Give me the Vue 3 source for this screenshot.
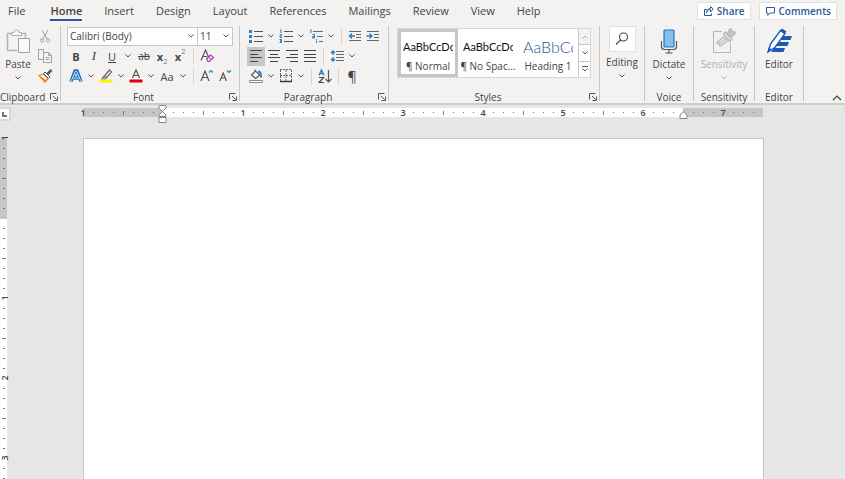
<template>
  <div class="word">
    <header class="ribbon">
      <nav class="tabs">
        <a v-for="tab in tabs" :key="tab" href="#" class="tab" :class="{ active: tab === activeTab }" @click.prevent="activeTab = tab">{{ tab }}</a>
        <div class="actions">
          <button type="button" class="action">
            <svg width="11" height="11" viewBox="0 0 11 11"><path d="M4 3.500H1.500v6h7V7.500M3.500 7c.2-2.200 1.500-3.200 4-3.200V6L10.300 3 7.500.7v1.800C5 2.800 3.700 4.300 3.500 7z" /></svg>
            Share
          </button>
          <button type="button" class="action">
            <svg width="11" height="11" viewBox="0 0 11 11"><path d="M1.500 1.500h8v5.500H5L2.800 9.300V7H1.500z" /></svg>
            Comments
          </button>
        </div>
      </nav>

      <div class="groups">
        <section class="group clipboard">
          <div class="clip-content">
            <button type="button" class="big">
              <svg width="24" height="26" viewBox="0 0 24 26" fill="none">
                <path d="M5.500 5.500h-4v17H11M15.500 5.500h4V10" stroke="#b5b3b1" stroke-width="1.500" />
                <path d="M5.500 7.500v-3H8a2.500 2.500 0 0 1 5 0h2.500v3z" fill="#f8f8f8" stroke="#b0aeac" />
                <path d="M12.500 10.500h11v14h-11z" fill="#fafafa" stroke="#a3a1a0" />
              </svg>
              <span>Paste</span>
              <svg class="chev" width="6" height="4"><path d="M.5.5 3 3 5.500.5" /></svg>
            </button>
            <div class="clip-tools">
              <button type="button" class="tool" aria-label="Cut">
                <svg width="14" height="14" viewBox="0 0 14 14" fill="none" stroke="#a3a1a0"><path d="M4 1l5 9M10 1L5 10" /><circle cx="4" cy="11.500" r="1.600" /><circle cx="10" cy="11.500" r="1.600" /></svg>
              </button>
              <button type="button" class="tool" aria-label="Copy">
                <svg width="15" height="14" viewBox="0 0 15 14" stroke="#a3a1a0" fill="#f6f5f4"><path d="M.5.5h5v10h-5zM5.500 3.500h5l3 3v7h-8z" /><path d="M10.500 3.500v3h3M7.500 8.500h4M7.500 10.500h4" fill="none" /></svg>
              </button>
              <button type="button" class="tool" aria-label="Format Painter">
                <svg width="15" height="14" viewBox="0 0 15 14" fill="none"><path d="M1 6.500l4.500-1.500L10 9.500 7 13z" fill="#fff" stroke="#e07b16" stroke-width="1.300" /><path d="M3 8.500l4.500 3" stroke="#e07b16" stroke-width="1.500" /><path d="M5.500 4.500l5 5 1.500-1.500-5-5z" fill="#fff" stroke="#555" /><path d="M9.500 5L13.500 1" stroke="#555" stroke-width="2.500" /></svg>
              </button>
            </div>
          </div>
          <div class="label">Clipboard</div>
          <button type="button" class="launcher" aria-label="Clipboard settings"><svg width="8" height="8"><path d="M.5 6.500v-6h6M3 3l3.500 3.500M7.500 3.500v4h-4" /></svg></button>
        </section>

        <section class="group font">
          <div class="row combos">
            <label class="combo family">
              <select aria-label="Font"><option>Calibri (Body)</option></select>
              <svg class="chev" width="6" height="4"><path d="M.5.5 3 3 5.500.5" /></svg>
            </label>
            <label class="combo size">
              <select aria-label="Font size"><option>11</option></select>
              <svg class="chev" width="6" height="4"><path d="M.5.5 3 3 5.500.5" /></svg>
            </label>
          </div>
          <div class="row">
            <button type="button" class="tool"><b>B</b></button>
            <button type="button" class="tool serif"><i>I</i></button>
            <button type="button" class="tool"><u>U</u></button>
            <button type="button" class="drop wide" aria-label="Underline style"><svg class="chev" width="6" height="4"><path d="M.5.5 3 3 5.500.5" /></svg></button>
            <button type="button" class="tool small"><s>ab</s></button>
            <button type="button" class="tool script"><b>x</b><sub>2</sub></button>
            <button type="button" class="tool script"><b>x</b><sup>2</sup></button>
            <span class="sep"></span>
            <button type="button" class="tool" aria-label="Clear Formatting">
              <svg width="15" height="14" viewBox="0 0 15 14" fill="none"><path d="M1 11.500L5.500 1l3 7M3 7.500h4" stroke="#555" stroke-width="1.200" /><path d="M6.500 10l4-4 3 2.500-4 4H8z" fill="#f7e9fa" stroke="#a43bb5" stroke-width="1.200" /><path d="M8.500 8l3 2.500" stroke="#a43bb5" /></svg>
            </button>
          </div>
          <div class="row">
            <button type="button" class="tool" aria-label="Text Effects">
              <svg width="14" height="14" viewBox="0 0 14 14" fill="none"><path d="M2 12.500L6 2h2l4 10.500M4 9h6" stroke="#2372ba" stroke-width="3.400" /><path d="M2.200 12L6.300 2.500h1.400L11.800 12M4 9h6" stroke="#b9dcf6" stroke-width="1" /></svg>
            </button>
            <button type="button" class="drop" aria-label="Text effect options"><svg class="chev" width="6" height="4"><path d="M.5.5 3 3 5.500.5" /></svg></button>
            <button type="button" class="tool" aria-label="Highlight">
              <svg width="14" height="14" viewBox="0 0 14 14" fill="none"><path d="M5 7.500L10.500 1l2 2L7.500 8.500zM5 7l-2 3h3l1.500-1.500" stroke="#666" stroke-width="1.200" /><path d="M.5 12h13" stroke="#fff200" stroke-width="3" /></svg>
            </button>
            <button type="button" class="drop" aria-label="Highlight color"><svg class="chev" width="6" height="4"><path d="M.5.5 3 3 5.500.5" /></svg></button>
            <button type="button" class="tool" aria-label="Font Color">
              <svg width="14" height="14" viewBox="0 0 14 14" fill="none"><path d="M3.500 9L7 .8 10.500 9M4.500 6.500h5" stroke="#555" stroke-width="1.200" /><path d="M.5 12h13" stroke="#e3000f" stroke-width="3" /></svg>
            </button>
            <button type="button" class="drop" aria-label="Font color options"><svg class="chev" width="6" height="4"><path d="M.5.5 3 3 5.500.5" /></svg></button>
            <button type="button" class="tool case">Aa</button>
            <button type="button" class="drop" aria-label="Change case options"><svg class="chev" width="6" height="4"><path d="M.5.5 3 3 5.500.5" /></svg></button>
            <span class="sep"></span>
            <button type="button" class="tool" aria-label="Increase Font Size">
              <svg width="14" height="14" viewBox="0 0 14 14" fill="none"><path d="M1 12L5 2l4 10M2.500 8.500h5" stroke="#555" stroke-width="1.200" /><path d="M9 3.500l2-2 2 2" stroke="#2b88c8" stroke-width="1.200" /></svg>
            </button>
            <button type="button" class="tool" aria-label="Decrease Font Size">
              <svg width="14" height="14" viewBox="0 0 14 14" fill="none"><path d="M2 12l3.200-8 3.200 8M3.200 9h4" stroke="#555" stroke-width="1.200" /><path d="M9 1.500l2 2 2-2" stroke="#2b88c8" stroke-width="1.200" /></svg>
            </button>
          </div>
          <div class="label">Font</div>
          <button type="button" class="launcher" aria-label="Font settings"><svg width="8" height="8"><path d="M.5 6.500v-6h6M3 3l3.500 3.500M7.500 3.500v4h-4" /></svg></button>
        </section>

        <section class="group paragraph">
          <div class="row">
            <button type="button" class="tool" aria-label="Bullets">
              <svg width="14" height="14" viewBox="0 0 14 14"><path d="M0 1h3v3H0zM0 6h3v3H0zM0 11h3v3H0z" fill="#2b7cc0" /><path d="M5 2.500h9M5 7.500h9M5 12.500h9" stroke="#555" /></svg>
            </button>
            <button type="button" class="drop" aria-label="Bullet library"><svg class="chev" width="6" height="4"><path d="M.5.5 3 3 5.500.5" /></svg></button>
            <button type="button" class="tool" aria-label="Numbering">
              <svg width="14" height="14" viewBox="0 0 14 14" fill="none"><path d="M1 1h1v3M.5 5.500h2v1.500h-1.500v1.500h2M.5 10.500h2v1.500H1h1.500v1.500h-2" stroke="#2b7cc0" /><path d="M5 2.500h9M5 7.500h9M5 12.500h9" stroke="#555" /></svg>
            </button>
            <button type="button" class="drop" aria-label="Numbering library"><svg class="chev" width="6" height="4"><path d="M.5.5 3 3 5.500.5" /></svg></button>
            <button type="button" class="tool" aria-label="Multilevel List">
              <svg width="14" height="14" viewBox="0 0 14 14" fill="none"><path d="M1 1h1v3M3.500 5.500h2v3.500h-2V7.500h2M7.500 10v.8M7.500 11.500V14" stroke="#2b7cc0" /><path d="M4 2.500h10M8 7.500h6M10 12.500h4" stroke="#666" /></svg>
            </button>
            <button type="button" class="drop" aria-label="List library"><svg class="chev" width="6" height="4"><path d="M.5.5 3 3 5.500.5" /></svg></button>
            <span class="sep"></span>
            <button type="button" class="tool" aria-label="Decrease Indent">
              <svg width="14" height="12" viewBox="0 0 14 12" fill="none"><path d="M1 1.500h12M8 4.500h5M8 7.500h5M1 10.500h12" stroke="#666" /><path d="M7 6H1.500M4 3.500L1.500 6 4 8.500" stroke="#2b7cc0" stroke-width="1.300" /></svg>
            </button>
            <button type="button" class="tool" aria-label="Increase Indent">
              <svg width="14" height="12" viewBox="0 0 14 12" fill="none"><path d="M1 1.500h12M8 4.500h5M8 7.500h5M1 10.500h12" stroke="#666" /><path d="M.5 6H6M3.500 3.500L6 6 3.500 8.500" stroke="#2b7cc0" stroke-width="1.300" /></svg>
            </button>
          </div>
          <div class="row">
            <button v-for="a in aligns" :key="a.name" type="button" class="tool" :class="{ selected: a.name === align }" :aria-label="a.name" @click="align = a.name">
              <svg width="12" height="12" viewBox="0 0 12 12"><path :d="a.path" stroke="#444" /></svg>
            </button>
            <span class="sep"></span>
            <button type="button" class="tool" aria-label="Line Spacing">
              <svg width="14" height="14" viewBox="0 0 14 14" fill="none"><path d="M3 2v4M3 8v4M1 4l2-2 2 2M1 10l2 2 2-2" stroke="#2b7cc0" stroke-width="1.400" /><path d="M6 2.500h8M6 5.500h8M6 8.500h8M6 11.500h8" stroke="#666" /></svg>
            </button>
            <button type="button" class="drop" aria-label="Spacing options"><svg class="chev" width="6" height="4"><path d="M.5.5 3 3 5.500.5" /></svg></button>
          </div>
          <div class="row">
            <button type="button" class="tool" aria-label="Shading">
              <svg width="14" height="14" viewBox="0 0 14 14" fill="none"><path d="M2.500 6l4-4L11 6 6.500 9.500zM6 3V.5" stroke="#555" stroke-width="1.100" /><path d="M9 2.500c3 0 3 2 3 6" stroke="#2b7cc0" stroke-width="1.800" /><path d="M.5 11.500h13v2H.5z" fill="#fff" stroke="#888" /></svg>
            </button>
            <button type="button" class="drop" aria-label="Shading color"><svg class="chev" width="6" height="4"><path d="M.5.5 3 3 5.500.5" /></svg></button>
            <button type="button" class="tool" aria-label="Borders">
              <svg width="14" height="14" viewBox="0 0 14 14" fill="none"><path d="M1 .5h12M1 6.500h12M1.500 1v11M7 1v11M12.500 1v11" stroke="#666" stroke-dasharray="2 1" /><path d="M1 12.500h12" stroke="#333" stroke-width="1.400" /></svg>
            </button>
            <button type="button" class="drop" aria-label="Border options"><svg class="chev" width="6" height="4"><path d="M.5.5 3 3 5.500.5" /></svg></button>
            <span class="sep"></span>
            <button type="button" class="tool" aria-label="Sort">
              <svg width="15" height="15" viewBox="0 0 15 15" fill="none"><path d="M1 6.500L3.500.8 6 6.500M2 4.500h3" stroke="#2b7cc0" stroke-width="1.300" /><path d="M1 8.500h4.500L1 13.500h5" stroke="#444" stroke-width="1.200" /><path d="M10.500 1v12M7.500 10l3 3 3-3" stroke="#555" stroke-width="1.200" /></svg>
            </button>
            <span class="sep"></span>
            <button type="button" class="tool pilcrow">¶</button>
          </div>
          <div class="label">Paragraph</div>
          <button type="button" class="launcher" aria-label="Paragraph settings"><svg width="8" height="8"><path d="M.5 6.500v-6h6M3 3l3.500 3.500M7.500 3.500v4h-4" /></svg></button>
        </section>

        <section class="group styles">
          <div class="gallery">
            <button v-for="s in styles" :key="s.name" type="button" class="style" :class="{ chosen: s.name === style, heading: s.heading }" @click="style = s.name">
              <span class="sample">{{ s.sample }}</span>
              <span class="caption">{{ s.name }}</span>
            </button>
            <div class="scroll">
              <button type="button" aria-label="Previous styles" disabled><svg class="chev" width="6" height="4"><path d="M.5 3.500 3 1l2.500 2.500" /></svg></button>
              <button type="button" aria-label="Next styles"><svg class="chev" width="6" height="4"><path d="M.5.5 3 3 5.500.5" /></svg></button>
              <button type="button" aria-label="More styles"><svg class="chev" width="6" height="6"><path d="M0 .5h6M.5 2.500 3 5l2.500-2.500" /></svg></button>
            </div>
          </div>
          <div class="label">Styles</div>
          <button type="button" class="launcher" aria-label="Styles settings"><svg width="8" height="8"><path d="M.5 6.500v-6h6M3 3l3.500 3.500M7.500 3.500v4h-4" /></svg></button>
        </section>

        <section class="group editing">
          <button type="button" class="big">
            <span class="find">
              <svg width="14" height="14" viewBox="0 0 14 14" fill="none" stroke="#444" stroke-width="1.100"><circle cx="8.500" cy="5" r="4" /><path d="M5.500 8L1 12.500" /></svg>
            </span>
            <span>Editing</span>
            <svg class="chev" width="6" height="4"><path d="M.5.5 3 3 5.500.5" /></svg>
          </button>
        </section>

        <section class="group voice">
          <button type="button" class="big">
            <svg width="18" height="26" viewBox="0 0 18 26" fill="none"><path d="M1.500 13v5.500q0 3 3 3h9q3 0 3-3V13M9 21.500V25M5.500 25h7" stroke="#555" stroke-width="1.200" /><rect x="4" y="2" width="10" height="17" rx="1" fill="#83beec" stroke="#1e7ac4" stroke-width="1.200" /></svg>
            <span>Dictate</span>
            <svg class="chev" width="6" height="4"><path d="M.5.5 3 3 5.500.5" /></svg>
          </button>
          <div class="label">Voice</div>
        </section>

        <section class="group sensitivity">
          <button type="button" class="big" disabled>
            <svg width="24" height="26" viewBox="0 0 24 26" fill="none" stroke="#b8b6b4"><path d="M10 3.500H1.500v21h17V15" /><path d="M4.500 14.500l7-6 4 4.500-7 5.500z" fill="#cbc9c7" /><path d="M7 14.500l5-4M8.500 16.500l5-4" stroke="#f3f2f1" /><path d="M11 6l2.500-2.500 7 8L18 14z" fill="#c4c2c0" /><path d="M15.500 5.500l1.500-4 2.500-1 .5 3.500 3-.5.500 2.500-4.500 3z" fill="#c4c2c0" /><path d="M12.500 5.500l6.500 7" stroke="#f3f2f1" /></svg>
            <span>Sensitivity</span>
            <svg class="chev" width="6" height="4"><path d="M.5.5 3 3 5.500.5" /></svg>
          </button>
          <div class="label">Sensitivity</div>
        </section>

        <section class="group editor">
          <button type="button" class="big">
            <svg width="26" height="26" viewBox="0 0 26 26"><path d="M14 8h12l-1.500 4H12zM11 14h12l-1.500 4H9zM8 20h11l-1.500 4H5z" fill="#185abd" /><path d="M2.500 23l2-7L14.500 2.500 19 5.500 9 19.500z" fill="#fff" stroke="#185abd" stroke-width="1.400" /><path d="M14 3l2-2.500 4.500 3L18.500 6zM1 25.500l1.500-6 3.500 2.500z" fill="#185abd" /></svg>
            <span>Editor</span>
          </button>
          <div class="label">Editor</div>
        </section>

        <button type="button" class="collapse" aria-label="Collapse the ribbon"><svg width="10" height="6"><path d="M1 5l4-4 4 4" /></svg></button>
      </div>
    </header>

    <main class="workspace">
      <div class="ruler-bar">
        <button type="button" class="tab-stop" aria-label="Tab stop"><svg width="5" height="5"><path d="M1 0v4h4" /></svg></button>
        <div class="ruler">
          <div class="ticks">
            <span v-for="(t, i) in hTicks" :key="i" class="tick" :class="t.type">{{ t.text }}</span>
          </div>
          <svg class="marker left" width="9" height="18" viewBox="0 0 9 18"><path d="M1 .5h7v2.500L4.500 6.500 8 10v1.500H1V10l3.500-3.500L1 3zM1 12.500h7v5H1z" /></svg>
          <svg class="marker right" width="9" height="8" viewBox="0 0 9 8"><path d="M1 7.500V4L4.500.8 8 4v3.500z" /></svg>
        </div>
      </div>
      <div class="canvas">
        <div class="v-ruler">
          <div class="v-ticks">
            <span v-for="(t, i) in vTicks" :key="i" class="tick" :class="t.type">{{ t.text }}</span>
          </div>
        </div>
        <article class="page" contenteditable="true" spellcheck="false" aria-label="Document"></article>
      </div>
    </main>
  </div>
</template>

<script setup>
import { ref } from 'vue'

const tabs = ['File', 'Home', 'Insert', 'Design', 'Layout', 'References', 'Mailings', 'Review', 'View', 'Help']
const activeTab = ref('Home')

const aligns = [
  { name: 'Align Left', path: 'M0 .5h12M0 4.500h8M0 7.500h12M0 11.500h8' },
  { name: 'Center', path: 'M0 .5h12M2 4.500h8M0 7.500h12M2 11.500h8' },
  { name: 'Align Right', path: 'M0 .5h12M4 4.500h8M0 7.500h12M4 11.500h8' },
  { name: 'Justify', path: 'M0 .5h12M0 4.500h12M0 7.500h12M0 11.500h12' },
]
const align = ref('Align Left')

const styles = [
  { name: '¶ Normal', sample: 'AaBbCcDc' },
  { name: '¶ No Spac...', sample: 'AaBbCcDc' },
  { name: 'Heading 1', sample: 'AaBbCc', heading: true },
]
const style = ref('¶ Normal')

// eight ticks to the inch, the first inch is the margin
function makeTicks(count) {
  return Array.from({ length: count }, (_, i) => {
    if (i === 8) return { type: 'none', text: '' }
    if (i % 8 === 0) return { type: 'number', text: String(Math.abs(i / 8 - 1)) }
    return { type: i % 4 === 0 ? 'bar' : 'dot', text: '' }
  })
}

const hTicks = makeTicks(68)
const vTicks = makeTicks(96)
</script>

<style>
body {
  margin: 0;
}
</style>

<style scoped>
.word {
  display: flex;
  flex-direction: column;
  height: 100vh;
  overflow: hidden;
  background: #e6e6e6;
  color: #444;
  font-family: "Open Sans", "Noto Sans", sans-serif;
  font-size: 10px;
}

.word * {
  box-sizing: border-box;
}

button {
  display: flex;
  align-items: center;
  justify-content: center;
  padding: 0;
  border: none;
  background: none;
  color: inherit;
  font: inherit;
  cursor: pointer;
}

svg {
  display: block;
  flex: none;
}

.ribbon {
  flex: none;
  background: #f3f2f1;
  border-bottom: 2px solid #cfcdcc;
}

.tabs {
  display: flex;
  align-items: flex-start;
  gap: 22px;
  height: 26px;
  padding: 0 8px;
  font-size: 11px;
}

.tab {
  height: 21px;
  line-height: 22px;
  color: #444;
  text-decoration: none;
}

.tab:first-child {
  margin-right: 3px;
}

.tab.active {
  border-bottom: 2px solid #2b579a;
  font-weight: 600;
}

.actions {
  display: flex;
  gap: 8px;
  margin-left: auto;
  padding-top: 2px;
}

.action {
  gap: 3px;
  height: 18px;
  padding: 0 5px;
  border: 1px solid #e1dfdd;
  background: #fff;
  color: #2b579a;
  font-size: 10px;
  font-weight: 600;
}

.action svg {
  fill: none;
  stroke: #2b579a;
}

.groups {
  display: flex;
  height: 77px;
}

.group {
  position: relative;
  display: flex;
  flex: none;
  flex-direction: column;
  height: 75px;
  border-right: 1px solid #c8c6c4;
}

.label {
  margin-top: auto;
  line-height: 8px;
  text-align: center;
}

.launcher {
  position: absolute;
  right: 2px;
  bottom: 0;
  width: 8px;
  height: 8px;
}

.launcher svg,
.chev {
  fill: none;
  stroke: #555;
}

.clipboard {
  width: 61px;
}

.clipboard .label {
  padding-right: 19px;
}

.clip-content {
  display: flex;
  align-items: flex-start;
}

.big {
  flex-direction: column;
  width: 100%;
  padding-top: 2px;
}

.big > span:not(.find) {
  margin: 4px 0 6px;
  line-height: 12px;
}

.big:disabled {
  color: #b1afad;
}

.big:disabled .chev {
  stroke: #b1afad;
}

.clip-content .big {
  width: 36px;
}

.clip-tools .tool {
  height: 20px;
}

.row {
  display: flex;
  align-items: center;
  height: 20px;
}

.tool {
  width: 18px;
  height: 19px;
  font-size: 11px;
}

.tool.selected {
  background: #c8c6c4;
}

.tool.small {
  font-size: 10px;
}

.tool.serif {
  font-family: "Liberation Serif", serif;
  font-size: 13px;
}

.tool.case {
  width: 20px;
}

.tool.pilcrow {
  font-size: 14px;
}

.script sub,
.script sup {
  color: #2b88c8;
  font-size: 7px;
  line-height: 9px;
}

.script sub {
  align-self: flex-end;
}

.script sup {
  align-self: flex-start;
}

.drop {
  width: 12px;
  height: 19px;
}

.drop.wide {
  width: 14px;
}

.sep {
  width: 1px;
  height: 17px;
  margin: 0 4px;
  background: #d8d6d4;
}

.font {
  width: 179px;
  padding-left: 6px;
}

.font .label {
  padding-right: 19px;
}

.combo {
  display: flex;
  align-items: center;
  height: 19px;
  padding-right: 3px;
  border: 1px solid #c8c6c4;
  background: #fff;
}

.combo select {
  flex: 1;
  min-width: 0;
  padding: 0 0 0 2px;
  border: none;
  outline: none;
  background: none;
  color: #444;
  font: inherit;
  appearance: none;
}

.family {
  width: 131px;
}

.size {
  width: 36px;
  margin-left: -1px;
}

.paragraph {
  width: 149px;
  padding-left: 7px;
}

.paragraph .label {
  padding-right: 19px;
}

.styles {
  width: 211px;
  padding: 2px 8px 0;
}

.styles .label {
  padding-right: 12px;
}

.gallery {
  display: flex;
  height: 50px;
  border: 1px solid #d8d6d4;
  background: #fff;
}

.style {
  flex: 1;
  flex-direction: column;
  gap: 4px;
  min-width: 0;
  padding-top: 4px;
  border: 3px solid transparent;
}

.style.chosen {
  border-color: #c6c6c6;
}

.sample {
  width: 50px;
  height: 18px;
  overflow: hidden;
  color: #111;
  font-family: Lato, sans-serif;
  font-size: 11px;
  line-height: 18px;
  text-align: left;
  white-space: nowrap;
}

.heading .sample {
  color: #2f5496;
  font-size: 16px;
  font-weight: 300;
}

.caption {
  line-height: 12px;
  white-space: nowrap;
}

.scroll {
  display: flex;
  flex: none;
  flex-direction: column;
  width: 12px;
  border-left: 1px solid #c8c6c4;
}

.scroll button {
  flex: 1;
}

.scroll button + button {
  border-top: 1px solid #c8c6c4;
}

.scroll button:disabled {
  background: #f3f2f1;
}

.scroll button:disabled .chev {
  stroke: #b1afad;
}

.editing {
  width: 45px;
}

.editing .big {
  padding-top: 0;
}

.find {
  display: grid;
  place-items: center;
  width: 27px;
  height: 26px;
  border: 1px solid #e1dfdd;
  background: #fff;
}

.voice,
.editor {
  width: 49px;
}

.sensitivity {
  width: 61px;
}

.collapse {
  align-self: flex-end;
  margin: 0 3px 2px auto;
}

.collapse svg {
  fill: none;
  stroke: #444;
  stroke-width: 1.2;
}

.workspace {
  display: flex;
  flex: 1;
  flex-direction: column;
  min-height: 0;
}

.ruler-bar {
  position: relative;
  display: flex;
  flex: none;
  justify-content: center;
  height: 33px;
  padding: 3px 0 0 1px;
}

.tab-stop {
  position: absolute;
  top: 2px;
  left: -2px;
  width: 13px;
  height: 14px;
  border: 2px solid #d8d8d8;
  background: #fff;
}

.tab-stop svg {
  fill: none;
  stroke: #777;
  stroke-width: 2;
}

.ruler {
  position: relative;
  width: 680px;
  height: 9px;
  background: linear-gradient(to right, #c6c6c6 80px, #fff 80px, #fff 600px, #c6c6c6 600px);
}

.ticks {
  display: flex;
  height: 9px;
  margin-left: -5px;
}

.tick {
  display: flex;
  flex: none;
  align-items: center;
  justify-content: center;
  width: 10px;
  height: 9px;
  font-size: 9px;
  font-weight: 600;
  line-height: 9px;
}

.tick.dot::before,
.tick.bar::before {
  content: "";
  width: 1px;
  height: 1px;
  background: #777;
}

.ticks .bar::before {
  height: 4px;
}

.marker {
  position: absolute;
  fill: #fff;
  stroke: #888;
}

.marker.left {
  top: -3px;
  left: 75px;
}

.marker.right {
  top: 3px;
  left: 596px;
}

.canvas {
  display: flex;
  flex: 1;
  justify-content: center;
  min-height: 0;
  padding-left: 1px;
  position: relative;
}

.v-ruler {
  position: absolute;
  top: 0;
  bottom: 0;
  left: 0;
  width: 7px;
  background: linear-gradient(#c6c6c6 81px, #fff 81px);
}

.v-ticks {
  display: flex;
  flex-direction: column;
  margin-top: -5px;
}

.v-ticks .tick {
  width: 8px;
  height: 10px;
}

.v-ticks .number {
  transform: rotate(-90deg);
}

.v-ticks .dot::before {
  width: 2px;
}

.v-ticks .bar::before {
  width: 4px;
}

.page {
  width: 681px;
  border: 1px solid #c6c6c6;
  border-bottom: none;
  outline: none;
  background: #fff;
}
</style>
